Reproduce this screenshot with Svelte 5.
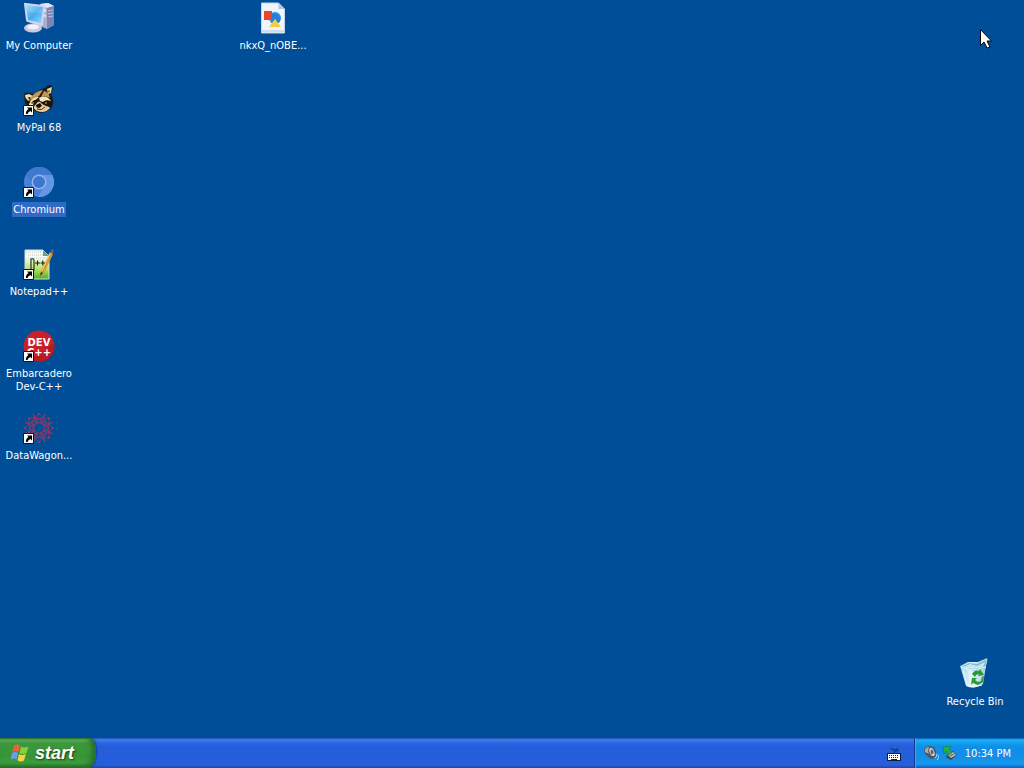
<script>
  const items = [
    { id: 'computer', label: 'My Computer', col: 1, row: 1 },
    { id: 'mypal', label: 'MyPal 68', col: 1, row: 2, shortcut: true },
    { id: 'chromium', label: 'Chromium', col: 1, row: 3, shortcut: true },
    { id: 'notepad', label: 'Notepad++', col: 1, row: 4, shortcut: true },
    { id: 'devcpp', label: 'Embarcadero Dev-C++', col: 1, row: 5, shortcut: true },
    { id: 'datawagon', label: 'DataWagon...', col: 1, row: 6, shortcut: true },
    { id: 'file', label: 'nkxQ_nOBE...', col: 4, row: 1 },
    { id: 'recycle', label: 'Recycle Bin', col: 13, row: 9 }
  ];
  let selected = $state('chromium');
  const petals = [0, 45, 90, 135, 180, 225, 270, 315];
</script>

{#snippet picture(id)}
  {#if id === 'computer'}
    <defs>
      <linearGradient id="screen" x1="0" y1="0" x2="1" y2="1">
        <stop offset="0" stop-color="#8fd8fb" /><stop offset=".5" stop-color="#44aaf0" /><stop offset="1" stop-color="#8fdcfc" />
      </linearGradient>
    </defs>
    <path d="M17 2 25 1l6 3v19l-7 4-7-3z" fill="#a9add0" />
    <path d="M17 2 25 1l6 3-7 2z" fill="#e4e6f6" />
    <path d="m24 6 7-2v19l-7 4z" fill="#7e83b4" />
    <path d="m18 6 5 1v3l-5-1zm0 6 5 1v2l-5-1z" fill="#dfe2f5" />
    <path d="m25 9 5-1M25 12l5-1M25 15l5-1" stroke="#b9bee0" />
    <path d="m10 20 7 1 2 4-9 1z" fill="#9094bd" />
    <ellipse cx="10" cy="26" rx="9" ry="4.5" fill="#c6c9e0" />
    <ellipse cx="10" cy="25" rx="6" ry="2.5" fill="#f2f2fa" />
    <path d="M1 2q0-2 2-1l17 2q2 0 2 2l-2 17q0 2-2 2L5 20q-2 0-2-2z" fill="#cfd5ee" />
    <path d="m3 3 17 2-2 16L5 18z" fill="url(#screen)" />
    <path d="m3 3 17 2-1 6Q9 11 4 9z" fill="#fff" opacity=".15" />
  {:else if id === 'mypal'}
    <path d="M1 12q0-5 5-3l6 1q4-5 10-6 4-5 7-2 2 4-1 8 4 8 1 13-3 5-12 6L7 25l-5-6z" fill="#1f1a14" />
    <path d="m2 11 4-1 4 2-4 5q-4-2-4-6zm22-6 5-2-1 6-3 1z" fill="#efdca8" />
    <path d="m5 13 2 0 1 2-2 1zm20-6 2-1-1 3z" fill="#443722" />
    <path d="M8 13q5-6 12-7l-4 6q-5 3-9 7zm13-6q5 1 6 7-5-3-9-1z" fill="#c39557" />
    <path d="M6 20q4-8 10-7-7 5-5 9l-4 2zm10-6q7-4 12 3-5-2-8 1l-3-1z" fill="#f8e7b6" />
    <path d="M8 19q3-4 6-3 1 3-3 5zm12-1q5-3 8 1-1 4-5 2z" fill="#18140f" />
    <path d="M13 20q3-5 6 0l4 2q4 1 4 2-5 6-13 3l-4-3z" fill="#eac99a" />
    <path d="m13 21 4-2 2 3-3 2q-3 0-3-3z" fill="#111" />
    <circle cx="10" cy="19" r="1" fill="#b6793c" /><circle cx="23" cy="19" r="1" fill="#b6793c" />
    <path d="M14 25q5 2 8-2" fill="none" stroke="#4b2818" />
  {:else if id === 'chromium'}
    <circle cx="16" cy="16" r="15" fill="#4a82da" />
    <path d="M2.9 8.7A15 15 0 0 1 29.3 9H16a7 7 0 0 0-6.2 10.2z" fill="#4078d0" />
    <path d="M29.3 9A15 15 0 0 1 15 31l7-12A7 7 0 0 0 18 9z" fill="#6496e4" />
    <circle cx="16" cy="16" r="7.5" fill="#96b5e9" />
    <circle cx="16" cy="16" r="6" fill="#3c77d3" />
  {:else if id === 'notepad'}
    <defs>
      <linearGradient id="paper" x1="0" y1="0" x2="0" y2="1">
        <stop offset=".25" stop-color="#f9fcf4" /><stop offset=".65" stop-color="#b6e368" /><stop offset="1" stop-color="#4eae22" />
      </linearGradient>
    </defs>
    <path d="M2 2h18l6 6v23H2z" fill="url(#paper)" stroke="#d6dbd0" />
    <path d="M3 4h16M5 7h15M5 10h17" stroke="#bdc7c9" stroke-dasharray="1 1" />
    <path d="M20 2v6h6z" fill="#7d9687" />
    <path d="m27 4 3 2-9 19-4 3 1-5z" fill="#d99832" />
    <path d="m27 5-8 18" stroke="#f7d177" />
    <path d="m27 4 2-3 2 1-1 4z" fill="#56657d" /><path d="m18 24 2 1-3 3z" fill="#34281d" />
    <path d="M8 22V11q3-1 3 2v9zM12 15h5m-2.500-2.500v5M17.500 15h4.500m-2.200-2.500v5" fill="none" stroke="#192117" stroke-width="1.1" />
  {:else if id === 'devcpp'}
    <circle cx="16" cy="16" r="15.5" fill="#c8202b" />
    <path d="M9 30 31 13q3 13-9 18-7 2-13-1" fill="#a81421" opacity=".5" />
    <text class="logo-text" text-anchor="middle"><tspan x="16" y="16">DEV</tspan><tspan x="16" y="26">C++</tspan></text>
  {:else if id === 'datawagon'}
    <g fill="none" stroke="#8c3866" stroke-width=".9">
      {#each petals as angle}
        <g transform={`rotate(${angle} 16 16)`}>
          <path d="m16 11-4-5 4-4 4 4zM12 6 10 2.500M20 6l2-3.500M12 6l-3 4M20 6l3 4M13 11l3-5 3 5" />
          <circle cx="16" cy="2" r="1" fill="#b03557" stroke="none" />
          <circle cx="20" cy="6" r="1" fill="#b03557" stroke="none" />
        </g>
      {/each}
      <circle cx="16" cy="16" r="5" />
    </g>
  {:else if id === 'file'}
    <path d="M4.500 1h17l6 6v24h-23z" fill="#f0f5fc" stroke="#c5d5e8" />
    <path d="M21.500 1v6h6z" fill="#b3c8de" />
    <path d="M5 28h22v2H5z" fill="#d0dcec" />
    <circle cx="18" cy="16" r="6" fill="#2196ed" />
    <path d="M7 9h8v9H7z" fill="#e9442d" />
    <path d="m18 17 6 8H12z" fill="#f6cc40" />
    <path d="M15 12a6 6 0 0 1 7 9l-4-5-3 4z" fill="#277dd7" />
  {:else if id === 'recycle'}
    <defs>
      <linearGradient id="glass" x1="0" y1="0" x2="1" y2="0">
        <stop offset="0" stop-color="#9fd0e7" /><stop offset=".4" stop-color="#e4f5fb" /><stop offset="1" stop-color="#a0cddd" />
      </linearGradient>
    </defs>
    <path d="m1 8 8-4 10 0 9-4q1 2-1 8l-3 18q-9 6-17 2z" fill="url(#glass)" />
    <path d="m2 9 8-4 8 1 9-4-1 8-11 3z" fill="#86b9d2" />
    <path d="m4 9 7-3 7 2 8-4-2 5-10 2z" fill="#c7e8f3" />
    <path d="m2 9 12 3 13-3M4 12l4 15 6 2 9-2" fill="none" stroke="#effcff" />
    <g fill="#289a32">
      <path d="M13 16q3-5 7-3l1-2 4 6-6 1 1-2q-3 0-4 3z" />
      <path d="m25 18-1 6-5 3v-3l3-1 1-4z" />
      <path d="m13 20 5 0-2 2 3 2v3l-5-2-2 2z" />
    </g>
  {/if}
{/snippet}

<div class="screen">
  <main class="desktop" aria-label="Desktop">
    {#each items as item}
      <button
        class="item"
        class:selected={selected === item.id}
        style:grid-column={item.col}
        style:grid-row={item.row}
        onclick={() => (selected = item.id)}
      >
        <svg class="icon" viewBox="0 0 32 32" aria-hidden="true">
          {@render picture(item.id)}
          {#if item.shortcut}
            <path d="M.5 21.5h10v10H.5z" fill="#fff" stroke="#16120e" />
            <path d="M4 23.500h5v5l-1.600-1.600Q5 28 4.500 30H3q-.5-3 2.500-5z" fill="#000" />
          {/if}
        </svg>
        <span class="label">{item.label}</span>
      </button>
    {/each}
  </main>

  <footer class="taskbar">
    <button class="start">
      <svg class="flag" viewBox="0 0 20 20" aria-hidden="true">
        <path d="M4 2.500q3-2 6 0L8.500 9Q6 7 2.500 9z" fill="#ed6136" />
        <path d="M11 3.500q3 2 7.500 0l-2 6.500q-3 2-7 0z" fill="#8bcd39" />
        <path d="M2 10q3-2 6 0l-1.500 6.500Q4 14.500.500 16.500z" fill="#6b9cf2" />
        <path d="M9 11q3 2 7 0l-2 6.500q-3 2-6.500 0z" fill="#f7d23c" />
      </svg>
      <span>start</span>
    </button>
    <button class="keyboard" aria-label="Keyboard">
      <svg viewBox="0 0 14 14" aria-hidden="true">
        <path d="M4 1v1h2v1h3V2h2v2H7v2" fill="none" stroke="#16307c" />
        <path d="M0 6h14v8H0z" fill="#111b3e" /><path d="M1 7h12v6H1z" fill="#fff" />
        <path d="M2 8.500h10M2 10.500h10" stroke="#222" stroke-dasharray="1 1" /><path d="M4 12.500h6" stroke="#222" />
      </svg>
    </button>
    <div class="tray">
      <svg viewBox="0 0 16 16" aria-hidden="true">
        <path d="m1 4 4-3 6 1 2 5-2 6-3 1-6-5z" fill="#50555e" />
        <path d="m2 4 3-2 4 1-3 6-4-2z" fill="#a6aab0" />
        <ellipse cx="9" cy="7" rx="3" ry="5" transform="rotate(-20 9 7)" fill="#c7c9cd" stroke="#454b57" />
        <ellipse cx="9" cy="7" rx="1.500" ry="2.500" fill="#636974" />
        <path d="M12 13q2-1 2-4M14 15q2-2 2-5" fill="none" stroke="#b3d5f4" />
      </svg>
      <svg viewBox="0 0 16 16" aria-hidden="true">
        <path d="m4 11 7-5 4 4-6 5-4-2z" fill="#3d4950" />
        <path d="m6 10 5-3 3 3-5 3z" fill="#b5c3ca" />
        <path d="m8 11 4-2" stroke="#4a5960" />
        <path d="m1 2 8-1-2 3 3 4-3 2-3-4-2 3z" fill="#27b03d" stroke="#12782c" stroke-width=".5" />
      </svg>
      <time datetime="22:34">10:34 PM</time>
    </div>
  </footer>

  <svg class="pointer" viewBox="0 0 12 20" aria-hidden="true">
    <path d="M.5.5v16L4 13l3 6 3-1-3-6h4.500z" fill="#fff" stroke="#000" />
  </svg>
</div>

<style>
  :global(body) {
    margin: 0;
    background: #004e98;
  }
  .screen {
    position: relative;
    display: flex;
    flex-direction: column;
    min-height: 100vh;
    overflow: hidden;
    background: #004e98;
    color: #fff;
    font-family: "DejaVu Sans Condensed", "DejaVu Sans", sans-serif;
    font-size: 11px;
    line-height: 13px;
  }
  button {
    margin: 0;
    padding: 0;
    border: 0;
    background: none;
    color: inherit;
    font: inherit;
    outline: none;
  }
  .desktop {
    flex: 1;
    display: grid;
    grid-template-columns: repeat(auto-fill, 78px);
    grid-auto-rows: 82px;
    height: 0;
  }
  .item {
    display: flex;
    flex-direction: column;
    align-items: center;
    gap: 4px;
    padding-top: 2px;
  }
  .icon {
    width: 32px;
    height: 32px;
    flex: none;
  }
  .label {
    max-width: 74px;
    padding: 1px;
    text-align: center;
  }
  .selected .label {
    background: #316ac5;
  }
  .item:focus-visible .label {
    outline: 1px dotted #fff;
  }
  .logo-text {
    fill: #fff;
    font: bold 10px "DejaVu Sans", sans-serif;
  }
  .taskbar {
    display: flex;
    height: 30px;
    background: linear-gradient(#1f4fb4 0, #4284ee 2px, #2f6be4 4px, #245edb 8px, #245edb 24px, #2860dc 27px, #1c46a6 30px);
  }
  .start {
    display: flex;
    align-items: center;
    gap: 5px;
    width: 96px;
    padding-left: 10px;
    border-radius: 0 6px 8px 0 / 0 14px 16px 0;
    background: linear-gradient(#2f7a2f 0, #68b768 2px, #3d983d 5px, #379437 18px, #3c9d3c 25px, #236b23 30px);
    box-shadow: inset -4px 0 5px #266e2b, 1px 0 2px #173b98;
    font: italic bold 18px "Liberation Sans", sans-serif;
    text-shadow: 1px 1px 2px #183a18;
  }
  .flag {
    width: 20px;
    height: 20px;
  }
  .keyboard {
    display: flex;
    align-items: center;
    margin-left: auto;
    padding: 2px 13px 0;
  }
  .keyboard svg {
    width: 14px;
    height: 14px;
  }
  .tray {
    display: flex;
    align-items: center;
    gap: 3px;
    padding: 0 13px 0 8px;
    border-left: 1px solid #12388c;
    background: linear-gradient(#0c59b9 0, #1cb4f5 2px, #139ee9 5px, #0f8eea 9px, #1290e8 20px, #1599ed 26px, #095bc9 30px);
    box-shadow: inset 1px 0 #1bb9fb;
  }
  .tray svg {
    width: 16px;
    height: 16px;
  }
  .tray time {
    padding-left: 4px;
  }
  .pointer {
    position: absolute;
    top: 29px;
    left: 980px;
    width: 12px;
    height: 20px;
  }
</style>
